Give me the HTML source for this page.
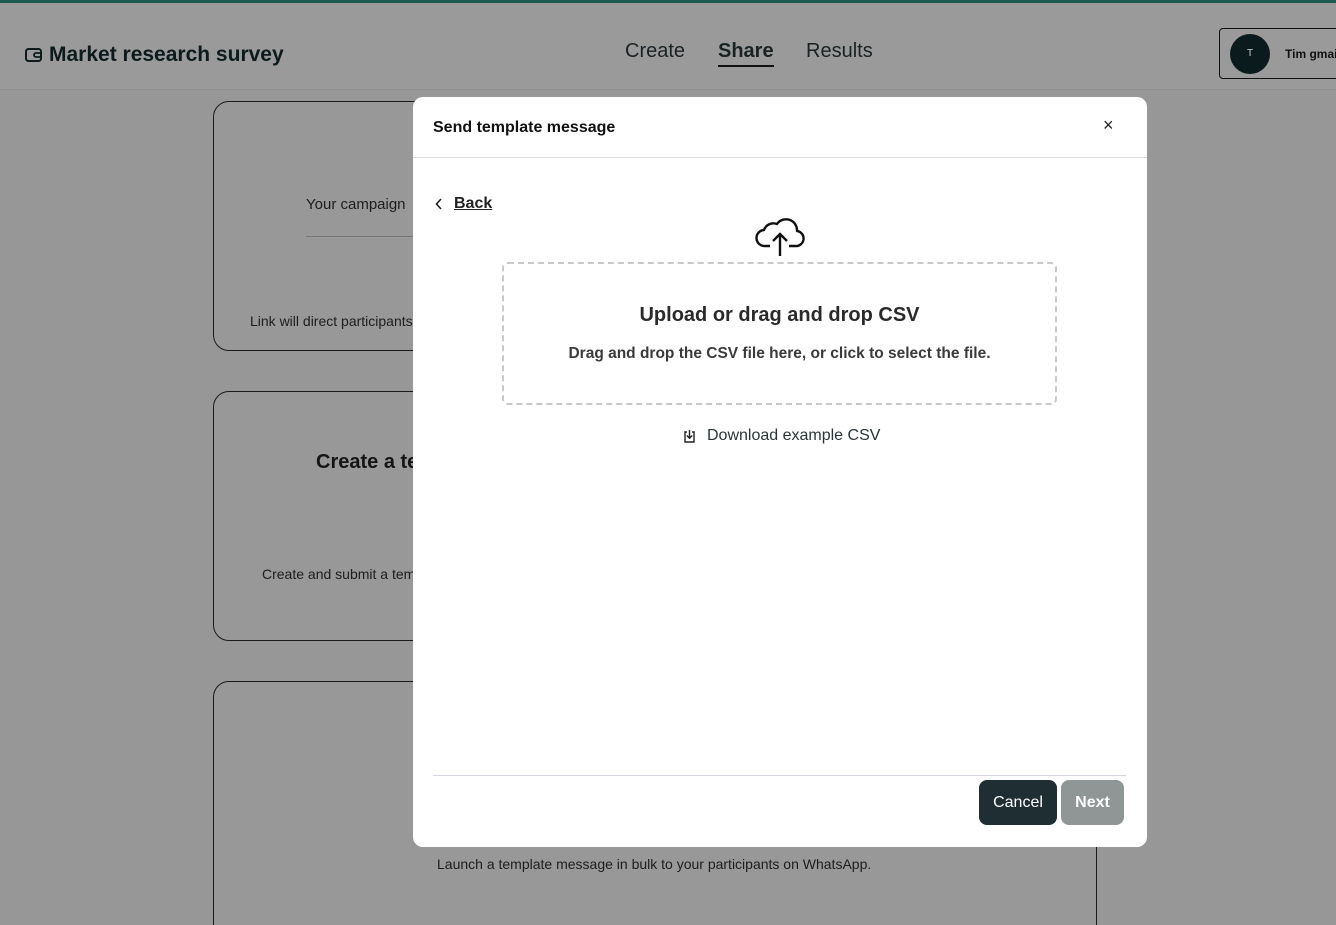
<!DOCTYPE html>
<html><head><meta charset="utf-8"><style>
*{box-sizing:border-box;margin:0;padding:0}
html,body{width:1336px;height:925px;overflow:hidden}
body{background:#979797;font-family:"Liberation Sans",Arial,sans-serif;position:relative;color:#1a1a1a}
.topbar{position:absolute;left:0;top:0;width:1336px;height:3px;background:#1f5a4e}
.header{position:absolute;left:0;top:3px;width:1336px;height:87px;background:#9a9a9a;border-bottom:1px solid #8e8e8e}
.title{position:absolute;left:25px;top:40px;font-size:21px;font-weight:bold;color:#0d1a1c;display:flex;align-items:center;gap:6px}
.nav{position:absolute;top:37px;font-size:20px;color:#1a2224}
.user{position:absolute;left:1219px;top:25px;width:130px;height:51px;border:1px solid #111;border-radius:4px}
.avatar{position:absolute;left:10px;top:5px;width:40px;height:40px;border-radius:50%;background:#0b1a1c;color:#ccc;font-size:10px;text-align:center;line-height:40px}
.uname{position:absolute;left:65px;top:18px;font-size:12px;font-weight:bold;color:#111}
.clip{position:absolute;left:0;top:0;width:1336px;height:925px;overflow:hidden}
.card{position:absolute;left:213px;width:884px;border:1.5px solid #1a1a1a;border-radius:16px;background:#989898}
.ct{position:absolute;font-size:14px;color:#1d1d1d}
.modal{position:absolute;left:413px;top:97px;width:734px;height:750px;background:#fff;border-radius:10px}
.mh{height:61px;border-bottom:1px solid #d8d8e0;position:relative}
.mh h1{position:absolute;left:20px;top:22px;font-size:16px;font-weight:bold;color:#111}
.close{position:absolute;left:690px;top:18px;font-size:18px;color:#222}
.back{position:absolute;left:22px;top:98px;font-size:16px;font-weight:bold;color:#222;display:flex;align-items:center;gap:11px}
.back span{text-decoration:underline}
.drop{position:absolute;left:89px;top:165px;width:555px;height:143px;border:2px dashed #c8c8c8;border-radius:6px;text-align:center}
.drop h2{margin-top:40px;font-size:20px;font-weight:bold;color:#2a2a2a}
.drop p{margin-top:18px;font-size:15.5px;font-weight:bold;color:#3a3a3a}
.dl{position:absolute;left:270px;top:330px;font-size:16px;color:#2a3436;display:flex;align-items:center;gap:11px}
.foot{position:absolute;left:20px;top:678px;width:693px;border-top:1px solid #d8d4e0}
.btn{position:absolute;top:683px;height:45px;border-radius:8px;font-size:16px;text-align:center;line-height:45px;color:#fff}
</style></head><body>
<div class="clip">
<div class="topbar"></div>
<div class="header">
 <div class="title"><svg width="18" height="16" viewBox="0 0 18 16"><rect x="1" y="2" width="15" height="12" rx="2.5" fill="none" stroke="#0d1a1c" stroke-width="2"/><path d="M11 6h5v4h-5a2 2 0 0 1 0-4z" fill="none" stroke="#0d1a1c" stroke-width="1.8"/></svg>Market research survey</div>
 <div class="nav" style="left:625px">Create</div>
 <div class="nav" style="left:718px;font-weight:bold;border-bottom:2px solid #111;padding-bottom:2px">Share</div>
 <div class="nav" style="left:806px">Results</div>
 <div class="user"><div class="avatar">T</div><div class="uname">Tim gmail</div></div>
</div>
<div class="card" style="top:101px;height:250px"></div>
<div class="ct" style="left:306px;top:196px;font-size:15px">Your campaign</div>
<div style="position:absolute;left:306px;top:236px;width:110px;border-top:1px solid #777"></div>
<div class="ct" style="left:250px;top:313px">Link will direct participants</div>
<div class="card" style="top:391px;height:250px"></div>
<div class="ct" style="left:316px;top:451px;font-size:20px;font-weight:bold;color:#151515">Create a te</div>
<div class="ct" style="left:262px;top:566px">Create and submit a tem</div>
<div class="card" style="top:681px;height:260px"></div>
<div class="ct" style="left:437px;top:856px">Launch a template message in bulk to your participants on WhatsApp.</div>

<div class="modal">
 <div class="mh"><h1>Send template message</h1><div class="close">×</div></div>
 <div class="back"><svg width="8" height="12" viewBox="0 0 8 12"><path d="M6 1L1.5 6 6 11" fill="none" stroke="#222" stroke-width="1.6"/></svg><span>Back</span></div>
 <svg style="position:absolute;left:342px;top:118px" width="50" height="42" viewBox="0 0 50 42"><path d="M15 31H10A8 8 0 0 1 9 15 A10 10 0 0 1 22 9 A11 11 0 0 1 42 16 A7.5 7.5 0 0 1 40 31H34" fill="none" stroke="#111" stroke-width="2.4" stroke-linejoin="round"/><path d="M25 41V19M18 26l7-7 7 7" fill="none" stroke="#111" stroke-width="2.4"/></svg>
 <div class="drop"><h2>Upload or drag and drop CSV</h2><p>Drag and drop the CSV file here, or click to select the file.</p></div>
 <div class="dl"><svg width="13" height="13" viewBox="0 0 13 13"><path d="M4 2H2v10h9V2H9" fill="none" stroke="#222" stroke-width="1.4"/><path d="M6.5 0v8M3.8 5.5l2.7 2.7 2.7-2.7" fill="none" stroke="#222" stroke-width="1.4"/></svg>Download example CSV</div>
 <div class="foot"></div>
 <div class="btn" style="left:566px;width:78px;background:#1f2e33">Cancel</div>
 <div class="btn" style="left:648px;width:63px;background:#909696;font-weight:bold">Next</div>
</div>
</div>
</body></html>
